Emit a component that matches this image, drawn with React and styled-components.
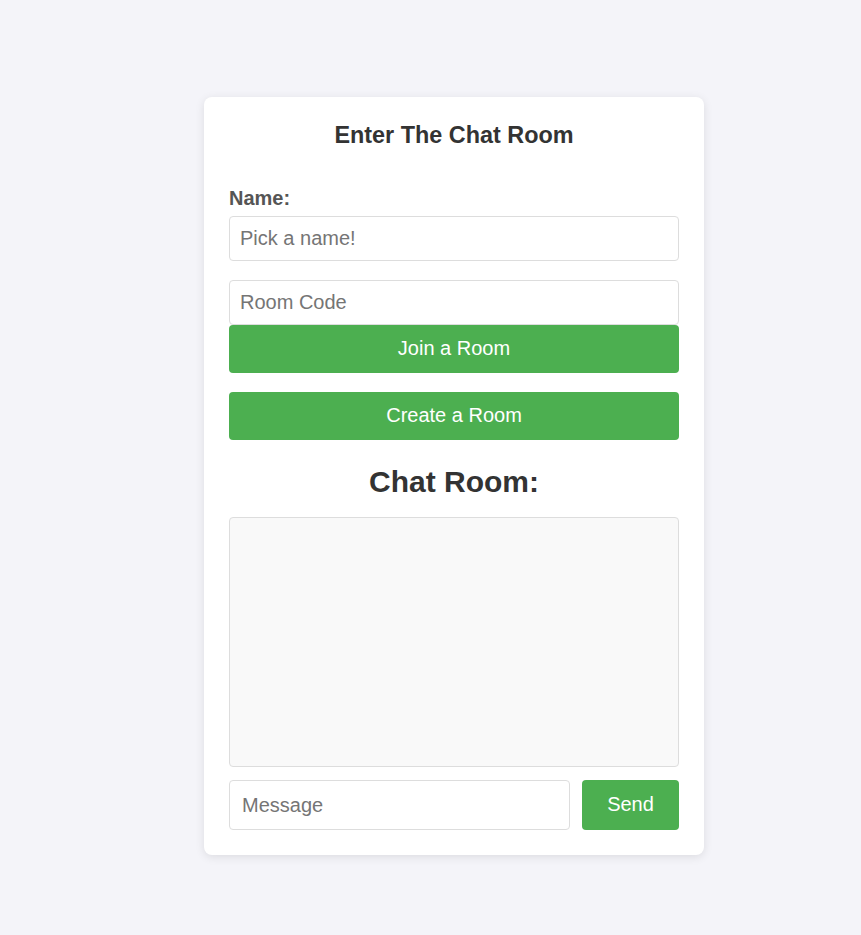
import React from "react";
import styled, { createGlobalStyle } from "styled-components";

const Global = createGlobalStyle`
  html, body { margin: 0; padding: 0; }
  body {
    background: #f4f4f9;
    font-family: "Liberation Sans", Arial, sans-serif;
    font-size: 20px;
    color: #333;
  }
  * { box-sizing: border-box; }
`;

const Page = styled.div`
  display: flex;
  justify-content: center;
  padding: 97px 0 80px 47px;
  min-height: 935px;
`;

const Card = styled.div`
  width: 500px;
  background: #fff;
  border-radius: 8px;
  box-shadow: 0 2px 10px rgba(0, 0, 0, 0.1);
  padding: 25px;
  display: flex;
  flex-direction: column;
`;

const Title = styled.h3`
  margin: 0;
  font-size: 23.4px;
  line-height: 27px;
  font-weight: bold;
  text-align: center;
  color: #333;
`;

const Label = styled.label`
  display: block;
  margin-top: 38px;
  font-size: 20px;
  line-height: 23px;
  font-weight: bold;
  color: #555;
`;

const Input = styled.input`
  display: block;
  width: 100%;
  height: ${(p) => p.$h || 45}px;
  margin-top: ${(p) => p.$mt || 0}px;
  padding: 0 ${(p) => p.$px || 10}px;
  border: 1px solid #ddd;
  border-radius: 4px;
  font-family: "Liberation Sans", Arial, sans-serif;
  font-size: 20px;
  color: #333;
  background: #fff;
  outline: none;
  &::placeholder { color: #757575; }
`;

const Button = styled.button`
  display: block;
  width: ${(p) => (p.$w ? `${p.$w}px` : "100%")};
  flex-shrink: 0;
  height: ${(p) => p.$h || 48}px;
  margin-top: ${(p) => p.$mt || 0}px;
  padding: 0 0 1px 0;
  border: none;
  border-radius: 4px;
  background: #4caf50;
  color: #fff;
  font-family: "Liberation Sans", Arial, sans-serif;
  font-size: 20px;
  cursor: pointer;
`;

const Heading = styled.h2`
  margin: 25px 0 0 0;
  font-size: 30px;
  line-height: 34px;
  font-weight: bold;
  text-align: center;
  color: #333;
`;

const ChatBox = styled.div`
  margin-top: 18px;
  height: 250px;
  border: 1px solid #ddd;
  border-radius: 4px;
  background: #f9f9f9;
`;

const MessageRow = styled.div`
  display: flex;
  gap: 12px;
  margin-top: 13px;
`;

export default function App() {
  return (
    <>
      <Global />
      <Page>
        <Card>
          <Title>Enter The Chat Room</Title>
          <Label>Name:</Label>
          <Input $mt={6} placeholder="Pick a name!" />
          <Input $mt={19} placeholder="Room Code" />
          <Button>Join a Room</Button>
          <Button $mt={19}>Create a Room</Button>
          <Heading>Chat Room:</Heading>
          <ChatBox />
          <MessageRow>
            <Input $h={50} $px={12} placeholder="Message" />
            <Button $w={97} $h={50}>Send</Button>
          </MessageRow>
        </Card>
      </Page>
    </>
  );
}
